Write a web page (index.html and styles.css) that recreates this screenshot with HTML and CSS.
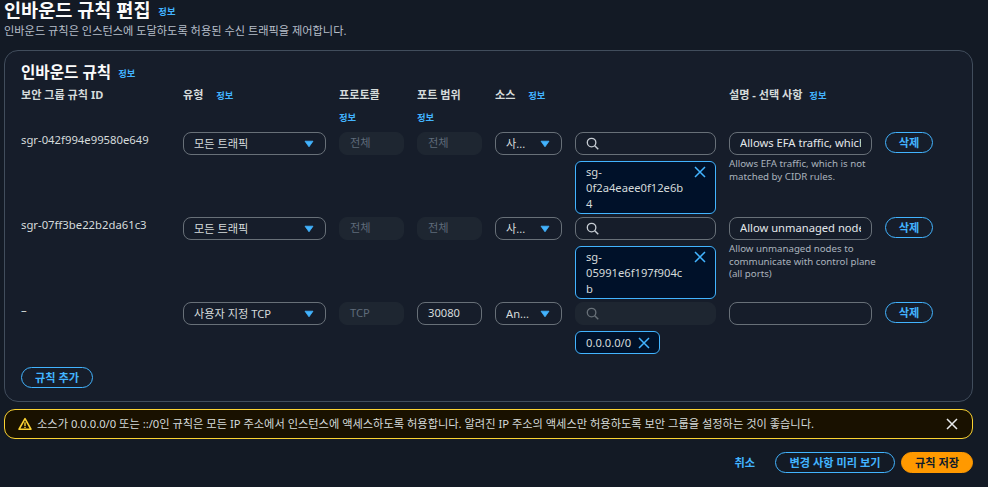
FILE: index.html
```html
<!DOCTYPE html>
<html lang="ko">
<head>
<meta charset="utf-8">
<title>인바운드 규칙 편집</title>
<link rel="stylesheet" href="styles.css">
</head>
<body>
<svg class="defs" width="0" height="0" aria-hidden="true">
  <symbol id="caret" viewBox="0 0 12 10"><path d="M1 1.5h10L6 8.5z" fill="#42b4ff" stroke="#42b4ff" stroke-width="1" stroke-linejoin="round"/></symbol>
  <symbol id="search" viewBox="0 0 14 14"><circle cx="6" cy="6" r="4.6" fill="none" stroke="currentColor" stroke-width="1.4"/><path d="M9.4 9.4l3.8 3.8" stroke="currentColor" stroke-width="1.5" fill="none"/></symbol>
  <symbol id="close" viewBox="0 0 12 12"><path d="M1 1l10 10M11 1L1 11" stroke="currentColor" stroke-width="1.5" fill="none"/></symbol>
</svg>
<main class="page">
  <header class="head">
    <h1 class="title">인바운드 규칙 편집 <a class="info">정보</a></h1>
    <p class="lead">인바운드 규칙은 인스턴스에 도달하도록 허용된 수신 트래픽을 제어합니다.</p>
  </header>
  <section class="card">
    <h2 class="card-title">인바운드 규칙 <a class="info">정보</a></h2>
    <div class="grid header">
      <div class="lab">보안 그룹 규칙 ID</div>
      <div class="lab">유형 <a class="info wide">정보</a></div>
      <div class="lab stack">프로토콜<a class="info">정보</a></div>
      <div class="lab stack">포트 범위<a class="info">정보</a></div>
      <div class="lab">소스 <a class="info wide">정보</a></div>
      <div></div>
      <div class="lab">설명 - 선택 사항 <a class="info">정보</a></div>
      <div></div>
    </div>

    <div class="grid row">
      <div class="rid">sgr-042f994e99580e649</div>
      <div class="field select">모든 트래픽<svg class="caret"><use href="#caret"/></svg></div>
      <div class="field off">전체</div>
      <div class="field off">전체</div>
      <div class="field select tight">사...<svg class="caret"><use href="#caret"/></svg></div>
      <div class="src">
        <div class="field search"><svg class="mag"><use href="#search"/></svg></div>
        <div class="token block"><span>sg-<br>0f2a4eaee0f12e6b<br>4</span><svg class="x"><use href="#close"/></svg></div>
      </div>
      <div class="desc">
        <div class="field clip"><span>Allows EFA traffic, which is not matched by CIDR rules.</span></div>
        <p class="hint">Allows EFA traffic, which is not matched by CIDR rules.</p>
      </div>
      <button class="btn del">삭제</button>
    </div>

    <div class="grid row">
      <div class="rid">sgr-07ff3be22b2da61c3</div>
      <div class="field select">모든 트래픽<svg class="caret"><use href="#caret"/></svg></div>
      <div class="field off">전체</div>
      <div class="field off">전체</div>
      <div class="field select tight">사...<svg class="caret"><use href="#caret"/></svg></div>
      <div class="src">
        <div class="field search"><svg class="mag"><use href="#search"/></svg></div>
        <div class="token block"><span>sg-<br>05991e6f197f904c<br>b</span><svg class="x"><use href="#close"/></svg></div>
      </div>
      <div class="desc">
        <div class="field clip"><span>Allow unmanaged nodes to communicate with control plane (all ports)</span></div>
        <p class="hint">Allow unmanaged nodes to communicate with control plane (all ports)</p>
      </div>
      <button class="btn del">삭제</button>
    </div>

    <div class="grid row">
      <div class="rid">–</div>
      <div class="field select">사용자 지정 TCP<svg class="caret"><use href="#caret"/></svg></div>
      <div class="field off">TCP</div>
      <div class="field">30080</div>
      <div class="field select tight">An...<svg class="caret"><use href="#caret"/></svg></div>
      <div class="src">
        <div class="field search off"><svg class="mag"><use href="#search"/></svg></div>
        <div class="token inline"><span>0.0.0.0/0</span><svg class="x"><use href="#close"/></svg></div>
      </div>
      <div class="desc"><div class="field"></div></div>
      <button class="btn del">삭제</button>
    </div>

    <button class="btn add">규칙 추가</button>
  </section>

  <div class="alert">
    <svg class="warn" viewBox="0 0 16 16"><path d="M8 1.8L1.2 14h13.6z" fill="none" stroke="#fbd332" stroke-width="1.8" stroke-linejoin="round"/><path d="M8 6v4.2M8 11.2v1.4" stroke="#fbd332" stroke-width="1.6" fill="none"/></svg>
    <span class="alert-text">소스가 0.0.0.0/0 또는 ::/0인 규칙은 모든 IP 주소에서 인스턴스에 액세스하도록 허용합니다. 알려진 IP 주소의 액세스만 허용하도록 보안 그룹을 설정하는 것이 좋습니다.</span>
    <svg class="alert-x"><use href="#close"/></svg>
  </div>

  <footer class="foot">
    <a class="cancel">취소</a>
    <button class="btn preview">변경 사항 미리 보기</button>
    <button class="btn save">규칙 저장</button>
  </footer>
</main>
</body>
</html>
```
FILE: styles.css
```css
* { box-sizing: border-box; }
html, body { margin: 0; height: 487px; overflow: hidden; }
body {
  background: #131a25;
  color: #d5dbdb;
  font-family: "Noto Sans", "Noto Sans CJK KR", sans-serif;
  font-size: 11.2px;
  line-height: 16px;
}
.defs { position: absolute; }
.page { padding: 0 15px 0 1px; }
.head { height: 50px; padding-left: 3px; }
.title {
  margin: 0;
  height: 20px;
  font-size: 18.6px;
  line-height: 20px;
  font-weight: 700;
  color: #fbfbfb;
}
.lead { margin: 3px 0 0; font-size: 11.2px; line-height: 16px; color: #b6bec9; }
.info { color: #42b4ff; font-size: 9.3px; font-weight: 700; line-height: 12px; margin-left: 3px; vertical-align: middle; }
.card {
  height: 352px;
  margin-left: 3px;
  background: #161d2a;
  border: 1px solid #414d5c;
  border-radius: 14px;
  padding: 11px 16px 0;
}
.card-title { margin: 0; height: 25px; font-size: 15.6px; line-height: 20px; font-weight: 700; color: #fbfbfb; }
.grid {
  display: grid;
  grid-template-columns: 149px 143px 65px 65px 67px 141px 143px 48px;
  column-gap: 13px;
  align-items: start;
}
.header { height: 45px; }
.lab { font-size: 11.1px; font-weight: 700; line-height: 14px; color: #d5dbdb; padding-top: 1px; }
.lab .info { margin-left: 4px; }
.lab .wide { margin-left: 10px; }
.stack { display: flex; flex-direction: column; gap: 10px; align-items: flex-start; }
.stack .info { margin-left: 0; }
.row { height: 85px; }
.row:last-of-type { height: 65px; }
.rid { font-size: 11.3px; color: #d5dbdb; line-height: 16px; }
.field {
  height: 23px;
  border: 1px solid #687078;
  border-radius: 8px;
  padding: 0 10px;
  font-size: 11.2px;
  line-height: 20px;
  color: #d5dbdb;
  background: transparent;
}
.field.off { border-color: #1e2631; background: #1e2631; color: #5f6b7a; }
.select { display: flex; align-items: center; justify-content: space-between; padding-right: 11px; }
.caret { width: 10px; height: 8px; flex: none; }
.src, .desc { display: flex; flex-direction: column; align-items: stretch; }
.search { display: flex; align-items: center; color: #c6ccd3; }
.search.off { color: #687078; }
.mag { width: 13px; height: 13px; }
.token {
  margin-top: 6px;
  display: flex;
  justify-content: space-between;
  border: 1px solid #42b4ff;
  border-radius: 6px;
  background: #001129;
  color: #d5dbdb;
  font-size: 11.2px;
  padding: 0 9px 0 10px;
}
.token.block { height: 53px; line-height: 16px; align-items: flex-start; }
.token.block span { line-height: 16px; margin-top: 2px; }
.token.inline { align-self: flex-start; width: 85px; height: 23px; line-height: 21px; align-items: center; }
.x { width: 12px; height: 12px; color: #42b4ff; flex: none; }
.block .x { margin-top: 4px; }
.clip { overflow: hidden; white-space: nowrap; font-weight: 400; color: #e4e8ea; }
.clip span { display: block; overflow: hidden; width: 121px; }
.hint { margin: 3px -8px 0 0; font-size: 9.7px; line-height: 12.5px; color: #aab3bd; }
.btn {
  font-family: inherit;
  background: transparent;
  border: 1px solid #42b4ff;
  border-radius: 11px;
  color: #42b4ff;
  font-size: 11.2px;
  font-weight: 700;
  height: 21px;
  padding: 0;
  line-height: 18px;
}
.del { width: 48px; }
.add { width: 72px; }
.alert {
  margin: 7px 0 0 3px;
  height: 30px;
  display: flex;
  align-items: center;
  background: #191100;
  border: 1px solid #fbd332;
  border-radius: 11px;
  padding: 0 14px 0 13px;
}
.warn { width: 14px; height: 14px; flex: none; }
.alert-text { margin-left: 5px; flex: 1; font-size: 11.23px; color: #d5dbdb; white-space: nowrap; }
.alert-x { width: 12px; height: 12px; color: #e8eaec; flex: none; }
.foot {
  margin-top: 13px;
  display: flex;
  justify-content: flex-end;
  align-items: center;
}
.cancel { color: #42b4ff; font-size: 11.2px; font-weight: 700; margin-right: 20px; }
.preview { width: 120px; }
.save { width: 72px; margin-left: 6px; background: #ff9900; border-color: #ff9900; color: #0f1b2a; }
```
